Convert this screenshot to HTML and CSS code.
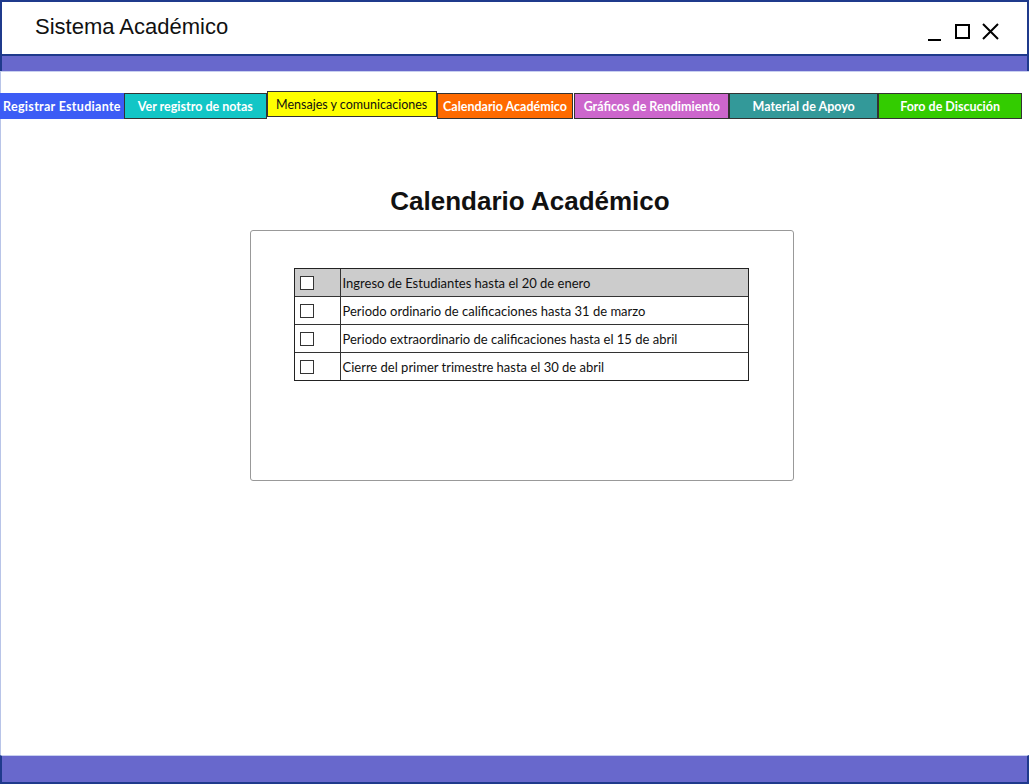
FILE: index.html
```html
<!DOCTYPE html>
<html lang="es">
<head>
<meta charset="utf-8">
<title>Sistema Académico</title>
<link rel="stylesheet" href="styles.css">
</head>
<body>
<div class="window">
  <header class="titlebar">
    <span class="title">Sistema Académico</span>
    <div class="controls">
      <svg width="80" height="24" viewBox="0 0 80 24">
        <line x1="3" y1="18" x2="16" y2="18" stroke="#000" stroke-width="2"/>
        <rect x="31" y="3" width="13" height="13" fill="none" stroke="#000" stroke-width="2"/>
        <path d="M58 2 L73 17 M73 2 L58 17" stroke="#000" stroke-width="2" fill="none"/>
      </svg>
    </div>
  </header>
  <div class="band"></div>
  <main class="content">
    <nav class="tabs">
      <span class="tab t-blue">Registrar Estudiante</span>
      <span class="tab t-cyan">Ver registro de notas</span>
      <span class="tab t-yellow">Mensajes y comunicaciones</span>
      <span class="tab t-orange">Calendario Académico</span>
      <span class="tab t-pink">Gráficos de Rendimiento</span>
      <span class="tab t-teal">Material de Apoyo</span>
      <span class="tab t-green">Foro de Discución</span>
    </nav>
    <h1 class="heading">Calendario Académico</h1>
    <section class="panel">
      <div class="list">
        <div class="row first"><span class="check"><span class="box"></span></span><span class="label">Ingreso de Estudiantes hasta el 20 de enero</span></div>
        <div class="row"><span class="check"><span class="box"></span></span><span class="label">Periodo ordinario de calificaciones hasta 31 de marzo</span></div>
        <div class="row"><span class="check"><span class="box"></span></span><span class="label">Periodo extraordinario de calificaciones hasta el 15 de abril</span></div>
        <div class="row"><span class="check"><span class="box"></span></span><span class="label">Cierre del primer trimestre hasta el 30 de abril</span></div>
      </div>
    </section>
  </main>
  <footer class="band bottom"></footer>
</div>
</body>
</html>
```

FILE: styles.css
```css
* { box-sizing: border-box; }
html, body { margin: 0; padding: 0; background: #fff; }
.window {
  width: 1029px;
  height: 784px;
  display: flex;
  flex-direction: column;
}
.titlebar {
  height: 56px;
  border: 2px solid #1f3a8c;
  background: #fff;
  display: flex;
  align-items: flex-start;
  justify-content: space-between;
  padding: 13px 22px 0 33px;
  flex: none;
}
.title {
  font-family: "Liberation Sans", Arial, sans-serif;
  font-size: 22px;
  color: #111;
  line-height: 24px;
}
.controls { padding-top: 7px; }
.controls svg { display: block; }
.band {
  height: 15px;
  background: #6868cc;
  border-left: 2px solid #1f3a8c;
  border-right: 2px solid #1f3a8c;
  flex: none;
}
.content {
  flex: 1;
  border-left: 1px solid #b8c4e8;
  border-top: 1px solid #c8d0f0;
  display: flex;
  flex-direction: column;
  align-items: center;
}
.tabs {
  align-self: stretch;
  display: flex;
  align-items: flex-start;
  margin-top: 21px;
  padding-right: 7px;
}
.tab {
  height: 26px;
  display: flex;
  align-items: center;
  justify-content: center;
  font-family: "Comic Sans MS", "Lato", sans-serif;
  font-size: 12.5px;
  font-weight: bold;
  color: #fff;
  border: 1px solid #333;
  white-space: nowrap;
}
.t-blue { width: 124px; background: #3c5cf5; border-color: #3c5cf5; margin-left: -1px; letter-spacing: 0.3px; }
.t-cyan { width: 143px; background: #12c6c6; }
.t-yellow { width: 170px; background: #ffff00; color: #111; font-weight: normal; margin-top: -2px; }
.t-orange { width: 137px; background: #ff6a00; }
.t-pink { width: 155px; background: #cc66cc; margin-left: 1px; }
.t-teal { width: 149px; background: #339999; }
.t-green { width: 144px; background: #33cc00; }
.heading {
  font-family: "Liberation Sans", Arial, sans-serif;
  font-size: 26px;
  line-height: 30px;
  font-weight: bold;
  color: #111;
  margin: 67px 0 14px 30px;
}
.panel {
  width: 544px;
  height: 251px;
  border: 1px solid #999;
  border-radius: 3px;
  margin-left: 13px;
  padding: 37px 0 0 43px;
}
.list {
  width: 455px;
  border: 1px solid #222;
}
.row {
  display: flex;
  height: 28px;
  border-top: 1px solid #333;
  background: #fff;
}
.row:first-child { border-top: none; }
.row.first { background: #cccccc; height: 27px; }
.check {
  width: 46px;
  border-right: 1px solid #333;
  display: flex;
  align-items: center;
  padding-left: 5px;
}
.box {
  width: 14px;
  height: 14px;
  border: 1px solid #333;
  background: #fff;
}
.label {
  display: flex;
  align-items: center;
  padding-left: 2px;
  font-family: "Comic Sans MS", "Lato", sans-serif;
  font-size: 13px;
  color: #111;
}
.bottom {
  height: 29px;
  border-bottom: 2px solid #1f3a8c;
  border-top: 1px solid #c8d0f0;
}
```
